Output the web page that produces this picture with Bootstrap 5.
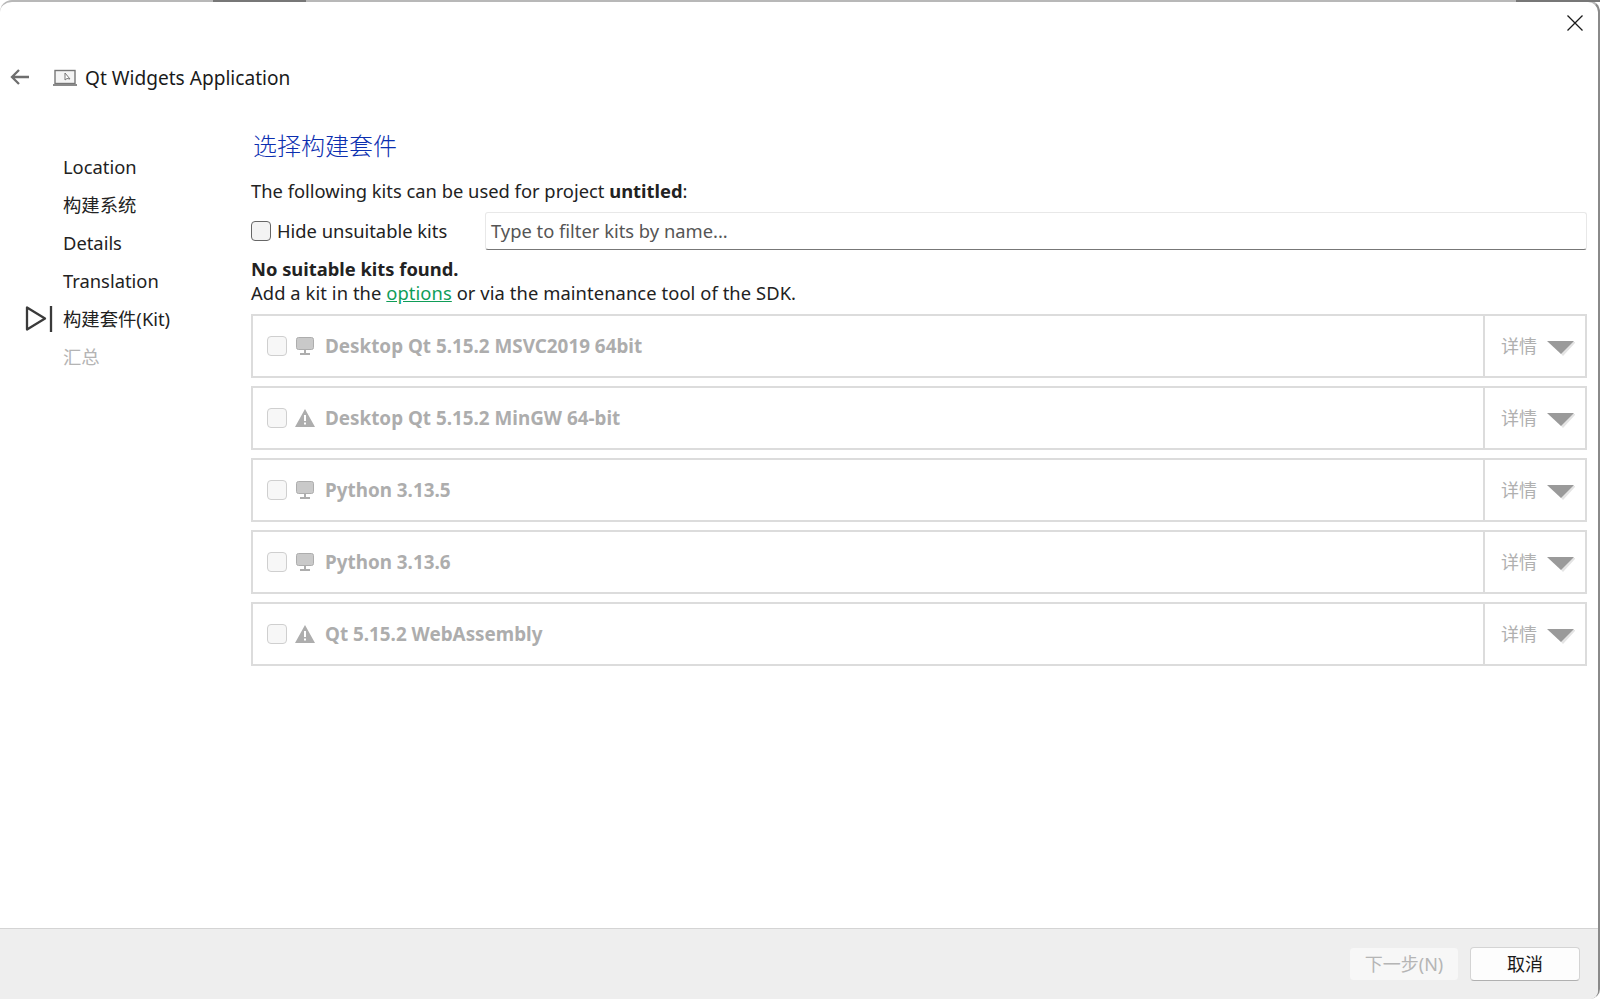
<!DOCTYPE html>
<html lang="zh"><head><meta charset="utf-8"><title>Qt Widgets Application</title>
<link href="https://cdn.jsdelivr.net/npm/bootstrap@5.3.0/dist/css/bootstrap.min.css" rel="stylesheet">
<style>
html,body{height:100%;margin:0;background:#fff}
body{font-family:"Noto Sans","Noto Sans CJK SC",sans-serif;font-size:18.35px;color:#222;overflow:hidden}
.win{width:1600px;height:999px;background:#fff;border-top:2px solid #b8b8b8;border-right:2px solid #8a8a8a;border-top-left-radius:12px;border-top-right-radius:12px;border-bottom-right-radius:10px;position:relative}
.topmark{position:absolute;top:-2px;height:2px;background:#777}
.closebtn{height:44px;padding:13px 15px 0 0}
.head{height:64px;padding-left:10px}
.head-title{font-size:19.1px;margin-left:8px;color:#1a1a1a}
.backarrow{margin:-3px 23px 0 0}
.bodyrow{flex:1;min-height:0}
.side{width:251px;padding-top:38px;flex:none}
.sideitem{height:38px;padding-left:63px;position:relative;line-height:38px}
.sideitem.off{color:#b4b4b4}
.marker{position:absolute;left:25px;top:5px}
.mainpane{flex:1;padding-right:11px;min-width:0;padding-top:19px}
.ttl{color:#0c2fb0;font-size:24px;line-height:34px;margin:0 0 16px 2px;font-weight:300}
.line{line-height:24px}
.line-addkit{letter-spacing:.08px}
.filterrow{height:38px;margin:9px 0 7px}
.cb{width:20px;height:20px;border:1px solid #666;border-radius:4px;background:#f3f3f3;flex:none}
.cb.dis{border-color:#cfcfcf;background:#f7f7f7}
.cblabel{margin-left:6px;width:208px;flex:none}
.filter{flex:1;height:38px;border:1px solid #e8e8e8;border-bottom:1px solid #777;border-radius:3px;padding:0 5px;line-height:36px;color:#555}
.lnk{color:#0f9d58;text-decoration:underline}
.kits{margin-top:9px}
.kit{height:64px;border:2px solid #dcdcdc;margin-bottom:8px;background:#fff}
.kit-main{flex:1;padding-left:14px;color:#adadad;font-weight:700;font-size:18.85px}
.kit-ico{width:20px;margin:0 10px 0 8px;flex:none;display:flex;justify-content:center}
.kit-more{width:102px;border-left:2px solid #dcdcdc;padding-left:16px;color:#b0b0b0;font-size:18px;flex:none}
.tri{margin:3px 0 0 10px;display:block}
.foot{height:71px;background:#eeeeee;border-top:1px solid #d4d4d4;padding:18px 18px 0 0;border-bottom-right-radius:8px;gap:11px}
.fbtn{width:110px;height:34px;border-radius:4px;font-size:18px;line-height:32px;text-align:center;background:#fdfdfd;border:1px solid #d4d4d4;border-bottom-color:#b0b0b0;color:#1a1a1a}
.fbtn.dis{background:#f7f7f7;border:1px solid #eeeeee;color:#b5b5b5}
</style></head>
<body>
<div class="win d-flex flex-column">
  <span class="topmark" style="left:213px;width:93px"></span>
  <span class="topmark" style="left:1516px;width:84px"></span>
  <div class="closebtn d-flex justify-content-end">
    <svg width="16" height="16" viewBox="0 0 16 16"><path d="M.5.5l15 15M15.5.5l-15 15" stroke="#1a1a1a" stroke-width="1.300" fill="none"/></svg>
  </div>
  <div class="head d-flex align-items-center">
    <svg class="backarrow" width="20" height="18" viewBox="0 0 20 18"><path d="M19 9H2M9 2L2 9l7 7" stroke="#6e6e6e" stroke-width="2.300" fill="none"/></svg>
    <svg width="24" height="18" viewBox="0 0 24 18"><rect x="2" y="1.500" width="20" height="13" fill="#f4f4f4" stroke="#777" stroke-width="1.400"/><path d="M0 16h24" stroke="#8a8a8a" stroke-width="2"/><path d="M12 4v7l2-1.500 3 .5z" fill="#fff" stroke="#777"/></svg>
    <span class="head-title">Qt Widgets Application</span>
  </div>
  <div class="bodyrow d-flex">
    <div class="side">
      <div class="sideitem">Location</div>
      <div class="sideitem">构建系统</div>
      <div class="sideitem">Details</div>
      <div class="sideitem">Translation</div>
      <div class="sideitem">
        <svg class="marker" width="28" height="28" viewBox="0 0 28 28"><path d="M2 2.500v22l18-11z" fill="none" stroke="#3a3a3a" stroke-width="2.300" stroke-linejoin="round"/><path d="M26 1v26" stroke="#3a3a3a" stroke-width="2.300"/></svg>
        构建套件(Kit)</div>
      <div class="sideitem off">汇总</div>
    </div>
    <div class="mainpane">
      <h1 class="ttl">选择构建套件</h1>
      <div class="line">The following kits can be used for project <b>untitled</b>:</div>
      <div class="filterrow d-flex align-items-center">
        <span class="cb"></span><span class="cblabel">Hide unsuitable kits</span>
        <div class="filter">Type to filter kits by name...</div>
      </div>
      <div class="line"><b>No suitable kits found.</b></div>
      <div class="line line-addkit">Add a kit in the <span class="lnk">options</span> or via the maintenance tool of the SDK.</div>
      <div class="kits">
        <div class="kit d-flex">
          <div class="kit-main d-flex align-items-center"><span class="cb dis"></span><span class="kit-ico"><svg width="18" height="18" viewBox="0 0 18 18"><rect x="0.500" y="0.500" width="17" height="12" rx="2" fill="#c9c9c9" stroke="#adadad"/><path d="M9 13v3M4 17h10" stroke="#adadad" stroke-width="2"/></svg></span>Desktop Qt 5.15.2 MSVC2019 64bit</div>
          <div class="kit-more d-flex align-items-center">详情<svg class="tri" width="28" height="16" viewBox="0 0 28 16"><path d="M3 2h26L16 16z" fill="#e4e4e4"/><path d="M0 1h27L14 14z" fill="#9a9a9a"/></svg></div>
        </div>
        <div class="kit d-flex">
          <div class="kit-main d-flex align-items-center"><span class="cb dis"></span><span class="kit-ico"><svg width="20" height="18" viewBox="0 0 20 18"><path fill-rule="evenodd" d="M10 0l10 18H0zM9 6v6h2V6zM9 13.500v2h2v-2z" fill="#adadad"/></svg></span>Desktop Qt 5.15.2 MinGW 64-bit</div>
          <div class="kit-more d-flex align-items-center">详情<svg class="tri" width="28" height="16" viewBox="0 0 28 16"><path d="M3 2h26L16 16z" fill="#e4e4e4"/><path d="M0 1h27L14 14z" fill="#9a9a9a"/></svg></div>
        </div>
        <div class="kit d-flex">
          <div class="kit-main d-flex align-items-center"><span class="cb dis"></span><span class="kit-ico"><svg width="18" height="18" viewBox="0 0 18 18"><rect x="0.500" y="0.500" width="17" height="12" rx="2" fill="#c9c9c9" stroke="#adadad"/><path d="M9 13v3M4 17h10" stroke="#adadad" stroke-width="2"/></svg></span>Python 3.13.5</div>
          <div class="kit-more d-flex align-items-center">详情<svg class="tri" width="28" height="16" viewBox="0 0 28 16"><path d="M3 2h26L16 16z" fill="#e4e4e4"/><path d="M0 1h27L14 14z" fill="#9a9a9a"/></svg></div>
        </div>
        <div class="kit d-flex">
          <div class="kit-main d-flex align-items-center"><span class="cb dis"></span><span class="kit-ico"><svg width="18" height="18" viewBox="0 0 18 18"><rect x="0.500" y="0.500" width="17" height="12" rx="2" fill="#c9c9c9" stroke="#adadad"/><path d="M9 13v3M4 17h10" stroke="#adadad" stroke-width="2"/></svg></span>Python 3.13.6</div>
          <div class="kit-more d-flex align-items-center">详情<svg class="tri" width="28" height="16" viewBox="0 0 28 16"><path d="M3 2h26L16 16z" fill="#e4e4e4"/><path d="M0 1h27L14 14z" fill="#9a9a9a"/></svg></div>
        </div>
        <div class="kit d-flex">
          <div class="kit-main d-flex align-items-center"><span class="cb dis"></span><span class="kit-ico"><svg width="20" height="18" viewBox="0 0 20 18"><path fill-rule="evenodd" d="M10 0l10 18H0zM9 6v6h2V6zM9 13.500v2h2v-2z" fill="#adadad"/></svg></span>Qt 5.15.2 WebAssembly</div>
          <div class="kit-more d-flex align-items-center">详情<svg class="tri" width="28" height="16" viewBox="0 0 28 16"><path d="M3 2h26L16 16z" fill="#e4e4e4"/><path d="M0 1h27L14 14z" fill="#9a9a9a"/></svg></div>
        </div>
      </div>
    </div>
  </div>
  <div class="foot d-flex justify-content-end">
    <div class="fbtn dis">下一步(N)</div>
    <div class="fbtn">取消</div>
  </div>
</div>
<script src="https://cdn.jsdelivr.net/npm/bootstrap@5.3.0/dist/js/bootstrap.bundle.min.js"></script>
</body></html>
